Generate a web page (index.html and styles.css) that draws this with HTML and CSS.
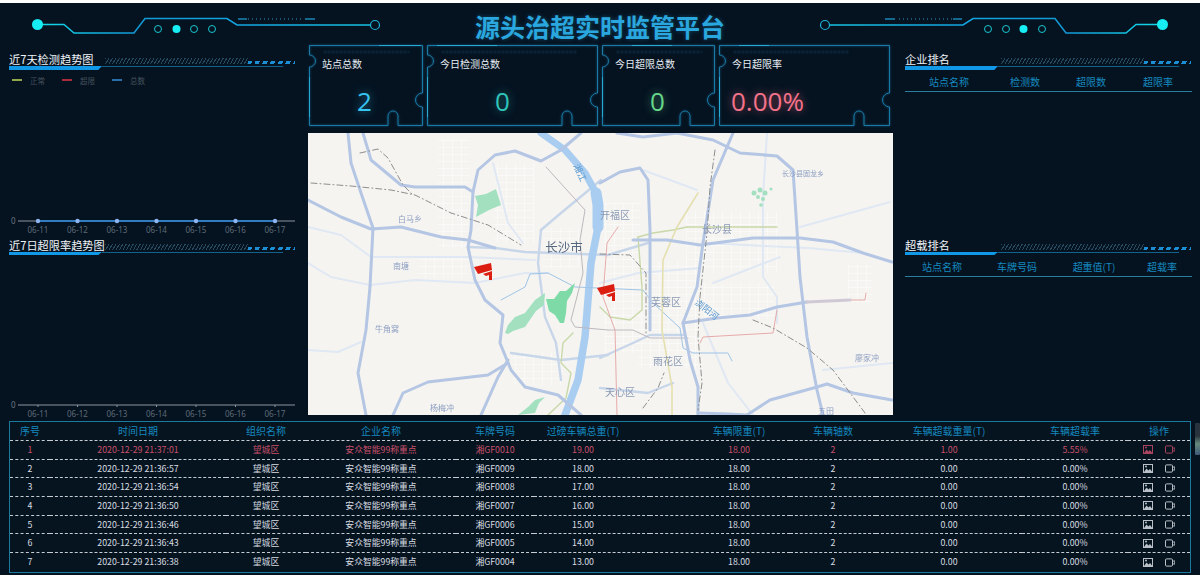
FILE: index.html
```html
<!DOCTYPE html>
<html lang="zh-CN">
<head>
<meta charset="utf-8">
<title>源头治超实时监管平台</title>
<link rel="stylesheet" href="styles.css">
</head>
<body>
<svg class="defs" width="0" height="0" aria-hidden="true">
  <defs>
    <linearGradient id="hdrLine" gradientUnits="userSpaceOnUse" x1="30" y1="0" x2="375" y2="0">
      <stop offset="0" stop-color="#14e0ea"/><stop offset=".3" stop-color="#1299d6"/><stop offset=".6" stop-color="#12a5e0"/><stop offset="1" stop-color="#16c4e0"/>
    </linearGradient>
    <g id="hdr">
      <polyline class="hdr-line" points="37,21.5 64,21.5 74,30 134,30 145,15.5 227,15.5 237,22 370,22"/>
      <circle class="hdr-solid" cx="37.5" cy="21.5" r="5.5"/>
      <circle class="hdr-end" cx="375" cy="22" r="4.5"/>
      <path class="hdr-dash" d="M238 16H247M305 16H315"/>
      <path class="hdr-dot" d="M248 16H304"/>
      <circle class="hdr-ring" cx="158" cy="26" r="3.5"/>
      <circle class="hdr-solid" cx="176.5" cy="26" r="4"/>
      <circle class="hdr-ring" cx="194" cy="26" r="3.5"/>
      <circle class="hdr-ring" cx="212" cy="26" r="3.5"/>
    </g>
    <symbol id="ico-img" viewBox="0 0 10 9">
      <rect x=".5" y=".5" width="9" height="8" fill="none" stroke="currentColor"/>
      <path d="M1 8 3.500 4.500 5.500 6.500 7 5 9 7.500V8Z" fill="currentColor"/>
      <circle cx="3" cy="2.600" r="1" fill="currentColor"/>
    </symbol>
    <symbol id="ico-vid" viewBox="0 0 10 9">
      <rect x=".5" y=".9" width="7" height="7.200" rx="1" fill="none" stroke="currentColor"/>
      <path d="M7.800 3.200 9.700 2.800V6.200L7.800 5.800" fill="none" stroke="currentColor" stroke-width=".9"/>
    </symbol>
    <pattern id="streets" width="9" height="7" patternUnits="userSpaceOnUse">
      <path d="M0 .5H9M.5 0V7" stroke="#fff" stroke-width=".8" fill="none"/>
    </pattern>
    <g id="cam">
      <path d="M0 4 17 0 18 7 4 11Z"/>
      <path d="M9 11 18 8V17H15V12L12 13Z"/>
    </g>
  </defs>
</svg>

<div class="page">
  <header class="top">
    <svg class="hdr-svg" viewBox="0 0 400 42"><use href="#hdr"/></svg>
    <h1 class="top-title">源头治超实时监管平台</h1>
    <svg class="hdr-svg hdr-flip" viewBox="0 0 400 42"><use href="#hdr"/></svg>
  </header>

  <main class="main">
    <section class="col">
      <div class="panel panel-first">
        <div class="head">
          <div class="head-top"><h2 class="head-title">近7天检测趋势图</h2><i class="hatch"></i><i class="dashes"></i></div>
          <div class="head-rule"><i class="rule-bar"></i><i class="rule-line"></i></div>
        </div>
        <div class="legend">
          <span class="legend-item"><i class="key key-green"></i>正常</span>
          <span class="legend-item"><i class="key key-red"></i>超限</span>
          <span class="legend-item"><i class="key key-blue"></i>总数</span>
        </div>
        <svg class="chart chart-a" viewBox="0 0 286 152">
          <line class="axis" x1="9" y1="134" x2="286" y2="134"/>
          <line class="series" x1="29" y1="134" x2="266" y2="134"/>
          <g class="points">
            <circle cx="29" cy="134" r="2.200"/><circle cx="68.500" cy="134" r="2.200"/><circle cx="108" cy="134" r="2.200"/><circle cx="147.500" cy="134" r="2.200"/><circle cx="187" cy="134" r="2.200"/><circle cx="226.500" cy="134" r="2.200"/><circle cx="266" cy="134" r="2.200"/>
          </g>
          <text class="tick-y" x="2" y="137">0</text>
          <g class="ticks">
            <text x="29" y="145.500">06-11</text><text x="68.500" y="145.500">06-12</text><text x="108" y="145.500">06-13</text><text x="147.500" y="145.500">06-14</text><text x="187" y="145.500">06-15</text><text x="226.500" y="145.500">06-16</text><text x="266" y="145.500">06-17</text>
          </g>
        </svg>
      </div>
      <div class="panel">
        <div class="head">
          <div class="head-top"><h2 class="head-title">近7日超限率趋势图</h2><i class="hatch"></i><i class="dashes"></i></div>
          <div class="head-rule head-rule-thin"><i class="rule-bar"></i><i class="rule-line"></i></div>
        </div>
        <svg class="chart chart-b" viewBox="0 0 286 160">
          <line class="axis" x1="9" y1="150" x2="286" y2="150"/>
          <path class="axis-marks" d="M29 150v2M68.500 150v2M108 150v2M147.500 150v2M187 150v2M226.500 150v2M266 150v2"/>
          <text class="tick-y" x="2" y="153">0</text>
          <g class="ticks">
            <text x="29" y="161.500">06-11</text><text x="68.500" y="161.500">06-12</text><text x="108" y="161.500">06-13</text><text x="147.500" y="161.500">06-14</text><text x="187" y="161.500">06-15</text><text x="226.500" y="161.500">06-16</text><text x="266" y="161.500">06-17</text>
          </g>
        </svg>
      </div>
    </section>

    <section class="center">
      <div class="stats">
        <div class="stat stat-s">
          <svg class="frame" viewBox="0 0 114 81">
            <path class="frame-line" d="M.5 .5H113.500V48A7 7 0 0 0 113.500 62V80.500H89V71A5 5 0 0 0 79 71V80.500H.5V22A6 6 0 0 0 .5 10Z"/>
            <path class="frame-glow" d="M.5 32V72M70 .5H112"/><path class="frame-dash" d="M15 7H100"/>
          </svg>
          <div class="stat-label">站点总数</div>
          <div class="stat-value v-blue v-pos-a">2</div>
        </div>
        <div class="stat stat-l">
          <svg class="frame" viewBox="0 0 171 81">
            <path class="frame-line" d="M.5 .5H170.500V48A7 7 0 0 0 170.500 62V80.500H145V71A5 5 0 0 0 135 71V80.500H.5V22A6 6 0 0 0 .5 10Z"/>
            <path class="frame-glow" d="M.5 32V72M10 .5H70"/><path class="frame-dash" d="M15 7H150"/>
          </svg>
          <div class="stat-label">今日检测总数</div>
          <div class="stat-value v-teal v-pos-b">0</div>
        </div>
        <div class="stat stat-m">
          <svg class="frame" viewBox="0 0 113 81">
            <path class="frame-line" d="M.5 .5H112.500V48A7 7 0 0 0 112.500 62V80.500H88V71A5 5 0 0 0 78 71V80.500H.5V22A6 6 0 0 0 .5 10Z"/>
            <path class="frame-glow" d="M.5 32V72M30 .5H70"/><path class="frame-dash" d="M15 7H100"/>
          </svg>
          <div class="stat-label">今日超限总数</div>
          <div class="stat-value v-green v-pos-a">0</div>
        </div>
        <div class="stat stat-l">
          <svg class="frame" viewBox="0 0 171 81">
            <path class="frame-line" d="M.5 .5H170.500V48A7 7 0 0 0 170.500 62V80.500H145V71A5 5 0 0 0 135 71V80.500H.5V22A6 6 0 0 0 .5 10Z"/>
            <path class="frame-glow" d="M.5 32V72M20 .5H50"/><path class="frame-dash" d="M15 7H130"/>
          </svg>
          <div class="stat-label">今日超限率</div>
          <div class="stat-value v-red v-pos-c">0.00%</div>
        </div>
      </div>

      <svg class="map" viewBox="0 0 585 282" preserveAspectRatio="none">
        <rect width="585" height="282" fill="#f5f4f1"/>
        <g class="street-grid" fill="url(#streets)">
          <rect x="130" y="6" width="32" height="110"/><rect x="186" y="30" width="40" height="80"/>
          <rect x="378" y="78" width="92" height="62"/><rect x="330" y="128" width="60" height="108"/>
          <rect x="205" y="218" width="50" height="34"/><rect x="235" y="95" width="36" height="40"/>
          <rect x="296" y="70" width="36" height="150"/><rect x="396" y="150" width="70" height="36"/>
          <rect x="540" y="130" width="24" height="40"/><rect x="110" y="125" width="50" height="20"/>
        </g>
        <g class="road-light">
          <polyline points="0,94 33,102 63,124 160,124 227,127"/>
          <polyline points="0,130 23,144 62,152 107,147 167,150 217,140 240,140"/>
          <polyline points="0,217 30,219 53,209"/>
          <polyline points="459,0 455,64 455,144 469,164 469,190"/>
          <polyline points="492,94 582,69"/>
          <polyline points="405,150 472,124"/>
          <polyline points="395,110 500,115 555,120"/>
          <polyline points="515,237 584,230"/>
          <polyline points="335,37 389,57"/>
          <polyline points="292,150 330,140 392,135"/>
          <polyline points="185,30 200,90 215,110"/>
          <polyline points="395,190 420,250 445,282"/>
        </g>
        <g class="road-mid">
          <polyline points="203,220 253,227 300,222"/>
          <polyline points="233,97 230,130 237,184 248,210 253,247"/>
          <polyline points="233,97 253,80 293,47"/>
          <polyline points="160,114 187,115 217,119 300,122 340,110"/>
          <polyline points="292,255 340,260 365,250"/>
          <polyline points="292,225 325,210 342,202 375,202"/>
        </g>
        <path class="river" d="M233 0 257 17 277 40 288 60"/>
        <path class="river river-wide" d="M288 60 290 72 290 94"/>
        <path class="river river-mid" d="M290 94 283 130 277 204 270 247 257 282"/>
        <g class="metro-blue"><polyline points="193,167 217,154 222,141 240,140 267,154 290,155 335,157 345,170 372,195 375,215 385,220 420,220 424,228"/></g>
        <g class="metro-mauve"><polyline points="238,34 277,77 272,107 275,140 263,187 267,194 300,197 325,197 342,205 380,205"/></g>
        <g class="metro-olive"><polyline points="379,94 469,94"/><polyline points="330,104 345,100 365,97 379,94"/><polyline points="330,104 334,154 334,177 322,187 302,184 292,174"/><polyline points="265,200 255,210 253,230 263,240 258,265 240,282"/></g>
        <g class="metro-yellow"><polyline points="390,60 369,94 355,127 354,197 364,254 364,282"/></g>
        <g class="metro-red"><polyline points="310,94 299,110 295,164 307,197 309,282"/><polyline points="392,210 395,204 465,200 469,177"/><polyline points="542,167 557,167 558,160"/></g>
        <g class="road">
          <polyline points="40,0 43,30 53,60 65,95 62,154 58,197 50,240 58,282"/>
          <polyline points="55,0 63,27 93,52 107,54 157,54 165,59 163,97 160,114 167,147 177,167 195,182 192,210 203,237 217,254 250,262 273,282"/>
          <polyline points="165,59 170,37 187,22 207,18 233,28 253,17 273,0"/>
          <polyline points="0,67 33,84 63,96 93,94 133,104 160,107 187,115"/>
          <polyline points="85,282 95,260 120,249 180,242 200,230"/>
          <polyline points="173,282 190,244 200,227"/>
          <polyline points="309,0 335,4 369,0 405,7 432,20 469,23 485,37 489,97 492,144 499,204 509,257 515,282"/>
          <polyline points="425,0 405,47 395,110 389,154 375,190 382,227 390,254 390,282"/>
          <polyline points="292,50 312,39 332,35 340,47 342,97 342,197"/>
          <polyline points="325,107 359,107 392,112 445,105 492,105 525,109 555,120 584,129"/>
          <polyline points="375,190 409,185 442,182 469,174 499,169"/>
          <polyline points="439,282 462,267 509,254 519,251 545,260 584,267"/>
          <polyline points="390,280 420,281 439,282"/>
        </g>
        <polyline class="road-pink" points="499,169 542,167"/>
        <g class="rail">
          <polyline points="3,50 43,53 83,57 107,62 143,80 180,92 213,112"/>
          <polyline points="52,20 70,16 80,25 95,52 105,62"/>
          <polyline points="445,187 465,195 499,215 525,237 557,280"/>
          <polyline points="407,17 402,54 399,100 392,164 390,204 394,250 390,277"/>
          <polyline points="292,121 322,122 338,140 338,200"/>
          <polyline points="335,275 350,255 356,240"/>
        </g>
        <g class="park">
          <path d="M167 63 178 61 188 56 193 72 181 77 168 84 170 72Z"/>
          <path d="M197 200 200 192 207 184 217 180 227 167 237 160 236 172 228 178 217 194 205 198 200 201Z"/>
          <path d="M210 282 220 274 227 267 237 264 231 270 227 280Z"/>
        </g>
        <g class="park-dots">
          <circle cx="446" cy="60" r="2.500"/><circle cx="452" cy="57" r="2.500"/><circle cx="457" cy="60" r="2.500"/><circle cx="463" cy="56" r="1.500"/><circle cx="450" cy="64" r="2"/><circle cx="455" cy="66" r="2"/><circle cx="453" cy="72" r="1.800"/>
        </g>
        <path class="park-dark" d="M238 166 246 166 252 158 258 158 267 150 264 160 259 168 258 180 256 190 252 190 247 182 241 178Z"/>
        <g class="map-label">
          <text x="102" y="89">白马乡</text><text x="93" y="136">南塘</text><text x="79" y="199">牛角窝</text><text x="134" y="278">杨梅冲</text>
          <text x="559" y="228">廖家冲</text><text x="518" y="281">五田</text><text class="map-label-xs" x="495" y="43">长沙县固龙乡</text>
        </g>
        <g class="map-district">
          <text x="307" y="86">开福区</text><text x="409" y="100">长沙县</text><text x="358" y="173">芙蓉区</text><text x="360" y="232">雨花区</text><text x="312" y="263">天心区</text>
        </g>
        <text class="map-city" x="256" y="119">长沙市</text>
        <text class="map-river" transform="translate(397 179) rotate(38)">浏阳河</text>
        <text class="map-river" transform="translate(269 41) rotate(65)">湘江</text>
        <use class="cam" href="#cam" x="166" y="130"/>
        <use class="cam" href="#cam" x="289" y="151"/>
      </svg>
    </section>

    <section class="col">
      <div class="panel panel-first">
        <div class="head">
          <div class="head-top"><h2 class="head-title">企业排名</h2><i class="hatch"></i><i class="dashes"></i></div>
          <div class="head-rule"><i class="rule-bar"></i><i class="rule-line"></i></div>
        </div>
        <div class="rank-head rank-a"><span>站点名称</span><span>检测数</span><span>超限数</span><span>超限率</span></div>
      </div>
      <div class="panel">
        <div class="head">
          <div class="head-top"><h2 class="head-title">超载排名</h2><i class="hatch"></i><i class="dashes"></i></div>
          <div class="head-rule head-rule-thin"><i class="rule-bar"></i><i class="rule-line"></i></div>
        </div>
        <div class="rank-head rank-b"><span>站点名称</span><span>车牌号码</span><span>超重值(T)</span><span>超载率</span></div>
      </div>
    </section>
  </main>

  <section class="bottom">
    <table class="records">
      <colgroup>
        <col class="c1"><col class="c2"><col class="c3"><col class="c4"><col class="c5"><col class="c6"><col class="c7"><col class="c8"><col class="c9"><col class="c10"><col class="c11">
      </colgroup>
      <thead>
        <tr><th>序号</th><th>时间日期</th><th>组织名称</th><th>企业名称</th><th>车牌号码</th><th class="cell-weight">过磅车辆总重(T)</th><th class="cell-limit">车辆限重(T)</th><th>车辆轴数</th><th>车辆超载重量(T)</th><th>车辆超载率</th><th>操作</th></tr>
      </thead>
      <tbody>
        <tr class="over"><td>1</td><td>2020-12-29 21:37:01</td><td>望城区</td><td>安众智能99称重点</td><td>湘GF0010</td><td class="cell-weight">19.00</td><td class="cell-limit">18.00</td><td>2</td><td>1.00</td><td>5.55%</td><td><span class="ops"><svg class="ico"><use href="#ico-img"/></svg><svg class="ico"><use href="#ico-vid"/></svg></span></td></tr>
        <tr><td>2</td><td>2020-12-29 21:36:57</td><td>望城区</td><td>安众智能99称重点</td><td>湘GF0009</td><td class="cell-weight">18.00</td><td class="cell-limit">18.00</td><td>2</td><td>0.00</td><td>0.00%</td><td><span class="ops"><svg class="ico"><use href="#ico-img"/></svg><svg class="ico"><use href="#ico-vid"/></svg></span></td></tr>
        <tr><td>3</td><td>2020-12-29 21:36:54</td><td>望城区</td><td>安众智能99称重点</td><td>湘GF0008</td><td class="cell-weight">17.00</td><td class="cell-limit">18.00</td><td>2</td><td>0.00</td><td>0.00%</td><td><span class="ops"><svg class="ico"><use href="#ico-img"/></svg><svg class="ico"><use href="#ico-vid"/></svg></span></td></tr>
        <tr><td>4</td><td>2020-12-29 21:36:50</td><td>望城区</td><td>安众智能99称重点</td><td>湘GF0007</td><td class="cell-weight">16.00</td><td class="cell-limit">18.00</td><td>2</td><td>0.00</td><td>0.00%</td><td><span class="ops"><svg class="ico"><use href="#ico-img"/></svg><svg class="ico"><use href="#ico-vid"/></svg></span></td></tr>
        <tr><td>5</td><td>2020-12-29 21:36:46</td><td>望城区</td><td>安众智能99称重点</td><td>湘GF0006</td><td class="cell-weight">15.00</td><td class="cell-limit">18.00</td><td>2</td><td>0.00</td><td>0.00%</td><td><span class="ops"><svg class="ico"><use href="#ico-img"/></svg><svg class="ico"><use href="#ico-vid"/></svg></span></td></tr>
        <tr><td>6</td><td>2020-12-29 21:36:43</td><td>望城区</td><td>安众智能99称重点</td><td>湘GF0005</td><td class="cell-weight">14.00</td><td class="cell-limit">18.00</td><td>2</td><td>0.00</td><td>0.00%</td><td><span class="ops"><svg class="ico"><use href="#ico-img"/></svg><svg class="ico"><use href="#ico-vid"/></svg></span></td></tr>
        <tr><td>7</td><td>2020-12-29 21:36:38</td><td>望城区</td><td>安众智能99称重点</td><td>湘GF0004</td><td class="cell-weight">13.00</td><td class="cell-limit">18.00</td><td>2</td><td>0.00</td><td>0.00%</td><td><span class="ops"><svg class="ico"><use href="#ico-img"/></svg><svg class="ico"><use href="#ico-vid"/></svg></span></td></tr>
      </tbody>
    </table>
    <div class="scroll-thumb"></div>
  </section>
</div>
</body>
</html>
```
FILE: styles.css
```css
* { box-sizing: border-box; }
html, body { margin: 0; padding: 0; }
body {
  width: 1200px;
  height: 575px;
  overflow: hidden;
  background: #051321;
  color: #e6ebef;
  font-family: "Noto Sans CJK SC", "Noto Sans", sans-serif;
}
.defs { position: absolute; }
.page { height: 575px; border-top: 3px solid #fff; display: flex; flex-direction: column; }

/* header */
.top { height: 42px; display: flex; justify-content: space-between; }
.hdr-svg { width: 400px; height: 42px; display: block; }
.hdr-flip { transform: scaleX(-1); }
.hdr-line { fill: none; stroke: url(#hdrLine); stroke-width: 1.5; }
.hdr-solid { fill: #17eef4; }
.hdr-ring { fill: none; stroke: #19c6cf; stroke-width: 1; }
.hdr-end { fill: #051321; stroke: #1bb5d8; stroke-width: 1.2; }
.hdr-dash { stroke: #1b86b4; stroke-width: 1.5; fill: none; }
.hdr-dot { stroke: #1b6d92; stroke-width: 1.5; stroke-dasharray: 1 3; fill: none; }
.top-title {
  margin: 0;
  padding-top: 5px;
  font-size: 25px;
  line-height: 36px;
  font-weight: 700;
  color: #2aa7de;
  text-shadow: 0 0 4px rgba(42, 167, 222, .35);
  white-space: nowrap;
}

/* main */
.main { height: 370px; padding-left: 9px; display: grid; grid-template-columns: 286px 585px 286px; column-gap: 13px; }
.col { display: flex; flex-direction: column; min-width: 0; }
.col:last-child { margin-left: -1px; }
.panel-first { height: 193px; padding-top: 7px; }

.head { width: 286px; }
.head-top { height: 14px; display: grid; grid-template-columns: 96px 143px 47px; position: relative; }
.head-title { margin: 0; font-size: 11.2px; line-height: 14px; font-weight: 400; color: #f0f4f7; white-space: nowrap; }
.hatch { height: 6px; margin-top: 6px; background: repeating-linear-gradient(120deg, #264a60 0 1px, transparent 1px 3px); }
.dashes { height: 3px; margin-top: 9px; background: repeating-linear-gradient(115deg, #1c8fd4 0 4px, transparent 4px 7px); }
.head-rule { height: 4px; display: flex; }
.rule-bar { width: 93px; height: 100%; background: #1199e8; clip-path: polygon(0 0, 100% 0, 96% 100%, 0 100%); }
.rule-line { width: 181px; height: 1px; background: #12628e; }
.head-rule-thin { height: 3px; }

.legend { height: 16px; padding-left: 3px; display: flex; align-items: center; gap: 17px; font-size: 7.5px; color: #46525d; margin-top: 2px; }
.legend-item { display: flex; align-items: center; gap: 8px; }
.key { width: 10px; height: 2px; }
.key-green { background: #8fa64a; }
.key-red { background: #a82c3a; }
.key-blue { background: #2a6ea8; }

.chart { display: block; overflow: visible; width: 286px; font-family: "Noto Sans", sans-serif; }
.chart-a { height: 152px; margin-top: -1px; }
.chart-b { height: 160px; }
.axis { stroke: #8c959d; stroke-width: 1; }
.axis-marks { stroke: #8c959d; fill: none; }
.series { stroke: #2a8ae0; stroke-width: 1.3; }
.points circle { fill: #8fb4f0; }
.ticks text { fill: #5d6a76; font-size: 8px; text-anchor: middle; }
.tick-y { fill: #6b7681; font-size: 8px; }

.rank-head { height: 22px; padding-top: 2px; display: grid; align-items: center; border-bottom: 1px solid #2a7f9f; font-size: 10px; color: #1589bf; text-align: center; }
.rank-a { grid-template-columns: 88px 64px 68px 66px; }
.rank-b { grid-template-columns: 74px 76px 78px 58px; }

/* stats */
.center { min-width: 0; }
.stats { height: 81px; padding-left: 1px; display: flex; gap: 4px; margin-bottom: 7px; }
.stat { position: relative; height: 81px; flex: none; padding: 12px 0 0 13px; }
.stat-s { width: 114px; }
.stat-m { width: 113px; }
.stat-l { width: 171px; }
.frame { position: absolute; left: 0; top: 0; width: 100%; height: 100%; overflow: visible; filter: drop-shadow(0 0 1px rgba(30, 140, 190, .6)); }
.frame-line { fill: none; stroke: #197aa6; stroke-width: 1; }
.frame-glow { fill: none; stroke: #2ab7de; stroke-width: 1; opacity: .8; }
.frame-dash { fill: none; stroke: #10293a; stroke-width: 1; stroke-dasharray: 2 2; }
.stat-label { font-size: 10px; line-height: 14px; color: #e8edf2; position: relative; }
.stat-value { font-family: "Open Sans", sans-serif; font-weight: 400; font-size: 26px; line-height: 30px; margin-top: 15px; position: relative; }
.v-pos-a { margin-left: 35px; }
.v-pos-b { margin-left: 55px; }
.v-pos-c { margin-left: -1px; }
.v-blue { color: #36c4f0; text-shadow: 0 0 9px rgba(47, 185, 232, .65); }
.v-teal { color: #2fc4ba; text-shadow: 0 0 9px rgba(43, 184, 176, .6); }
.v-green { color: #66d68a; text-shadow: 0 0 9px rgba(95, 202, 130, .6); }
.v-red { color: #f4728a; text-shadow: 0 0 9px rgba(238, 107, 128, .65); }

/* map */
.map { display: block; width: 585px; height: 282px; font-family: "Noto Sans CJK SC", sans-serif; filter: blur(.35px); }
.street-grid { opacity: .55; }
.road polyline, .road-mid polyline, .road-light polyline, .metro-blue polyline, .metro-mauve polyline, .metro-olive polyline, .metro-yellow polyline, .metro-red polyline, .rail polyline, .road-pink { fill: none; stroke-linejoin: round; stroke-linecap: round; }
.road polyline { stroke: #b4c6e3; stroke-width: 3; }
.road-pink { stroke: #cfc9d6; stroke-width: 3; }
.road-mid polyline { stroke: #c8d6ea; stroke-width: 2.4; }
.road-light polyline { stroke: #e0e8f3; stroke-width: 2; }
.river { fill: none; stroke: #a9cdf0; stroke-width: 7; stroke-linecap: round; stroke-linejoin: round; }
.river-wide { stroke-width: 11; }
.river-mid { stroke-width: 7.5; }
.metro-blue polyline { stroke: #9fc4e6; stroke-width: 1; }
.metro-mauve polyline { stroke: #bfb8bd; stroke-width: 1; }
.metro-olive polyline { stroke: #c9d8a8; stroke-width: 1.4; }
.metro-yellow polyline { stroke: #e5e0b0; stroke-width: 1.6; }
.metro-red polyline { stroke: #e6aaa8; stroke-width: 1; }
.rail polyline { stroke: #8e8e8e; stroke-width: 1; stroke-dasharray: 6 3 1 3; }
.park path { fill: #a2e0c0; }
.park-dots circle { fill: #a2e0c0; }
.park-dark { fill: #7edba8; }
.map-label text { fill: #8d9ec2; font-size: 8px; text-anchor: middle; }
.map-label .map-label-xs { font-size: 7px; }
.map-district text { fill: #8a99b4; font-size: 10px; text-anchor: middle; }
.map-city { fill: #55667f; font-size: 12.500px; text-anchor: middle; }
.map-river { fill: #5e9ad0; font-size: 9px; text-anchor: middle; }
.cam { fill: #dc1e10; }

/* table */
.bottom { padding: 6px 0 0 9px; display: flex; align-items: flex-start; gap: 4px; }
.records {
  width: 1182px;
  height: 150px;
  table-layout: fixed;
  border-collapse: separate;
  border-spacing: 0;
  border: 1px solid #1d7a9f;
  background: #06141f;
  font-size: 8.8px;
  color: #d8dde2;
}
.c1 { width: 40px; } .c2 { width: 176px; } .c3 { width: 80px; } .c4 { width: 150px; } .c5 { width: 78px; }
.c6 { width: 116px; } .c7 { width: 140px; } .c8 { width: 86px; } .c9 { width: 146px; } .c10 { width: 106px; } .c11 { width: 62px; }
.records th, .records td { padding: 0; text-align: center; white-space: nowrap; font-weight: 400; line-height: 12px; }
.records th { font-size: 10px; color: #1589bf; height: 19px; border-bottom: 1px dashed #c4ccd4; }
.records td { height: 18.700px; border-bottom: 1px dashed #c4ccd4; }
.records tbody tr:last-child td { border-bottom: 0; }
.records th.cell-weight, .records td.cell-weight { padding-right: 18px; }
.records th.cell-limit, .records td.cell-limit { padding-left: 38px; }
.over td { color: #c9506b; }
.ops { display: flex; justify-content: center; gap: 12px; }
.ico { width: 10px; height: 9px; display: block; color: #b9c0c7; }
.over .ico { color: #a8445f; }
.scroll-thumb { width: 5px; height: 32px; margin-top: 2px; background: linear-gradient(#28333d 0 40%, #66897c 65%, #3d5878 100%); border-radius: 1px; }
```
